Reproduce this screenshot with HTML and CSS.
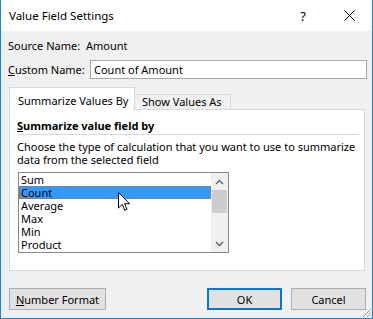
FILE: index.html
```html
<!DOCTYPE html>
<html>
<head>
<meta charset="utf-8">
<link rel="stylesheet" href="styles.css">
</head>
<body>
<div class="window">
  <div class="titlebar">
    <span class="title">Value Field Settings</span>
    <span class="help">?</span>
    <svg class="close" width="11" height="11" viewBox="0 0 11 11"><path d="M0.5 0.5 L10.5 10.5 M10.5 0.5 L0.5 10.5" stroke="#000" stroke-width="1" fill="none"/></svg>
  </div>
  <div class="body">
    <div class="row source"><span class="label">Source Name:</span><span class="value">Amount</span></div>
    <div class="row custom"><span class="label"><u>C</u>ustom Name:</span><div class="input">Count of Amount</div></div>
    <div class="tabs">
      <div class="tab active">Summarize Values By</div>
      <div class="tab inactive">Show Values As</div>
    </div>
    <div class="panel">
      <div class="heading"><u>S</u>ummarize value field by</div>
      <div class="desc">Choose the type of calculation that you want to use to summarize<br>data from the selected field</div>
      <div class="listbox">
        <ul class="items">
          <li>Sum</li>
          <li class="selected">Count</li>
          <li>Average</li>
          <li>Max</li>
          <li>Min</li>
          <li>Product</li>
        </ul>
        <div class="scrollbar">
          <div class="arrow"><svg width="9" height="6" viewBox="0 0 9 6"><path d="M1 5 L4.5 1.5 L8 5" stroke="#606060" stroke-width="1.4" fill="none"/></svg></div>
          <div class="thumb"></div>
          <div class="track"></div>
          <div class="arrow"><svg width="9" height="6" viewBox="0 0 9 6"><path d="M1 1 L4.5 4.5 L8 1" stroke="#606060" stroke-width="1.4" fill="none"/></svg></div>
        </div>
      </div>
    </div>
    <div class="buttons">
      <button class="btn numfmt"><u>N</u>umber Format</button>
      <span class="spacer"></span>
      <button class="btn ok">OK</button>
      <button class="btn cancel">Cancel</button>
    </div>
  </div>
  <svg class="grip" width="12" height="12" viewBox="0 0 12 12"><path d="M11 3 L3 11 M11 7 L7 11" stroke="#a0a0a0" stroke-width="1" fill="none"/></svg>
  <svg class="cursor" width="13" height="20" viewBox="0 0 13 20"><path d="M0.5 0.5 L0.5 16 L4.3 12.4 L6.8 18.3 L9 17.3 L6.6 11.7 L11.5 11.7 Z" fill="#fff" stroke="#000" stroke-width="1" stroke-linejoin="miter"/></svg>
</div>
</body>
</html>
```
FILE: styles.css
```css
* { box-sizing: border-box; }
html, body { margin: 0; padding: 0; }
body {
  font-family: "Noto Sans", "Open Sans", sans-serif;
  font-size: 11px;
  color: #000;
  background: #fff;
}
.window {
  position: relative;
  width: 373px;
  height: 319px;
  border: 1px solid #1883d7;
  border-top: none;
  background: #f0f0f0;
  display: flex;
  flex-direction: column;
}
.titlebar {
  height: 31px;
  background: #fff;
  display: flex;
  align-items: center;
  padding-left: 8px;
}
.title { flex: 1; font-size: 11.5px; }
.help { width: 12px; margin-right: 35px; text-align: center; font-size: 13px; }
.close { margin-right: 17px; }
.body {
  flex: 1;
  display: flex;
  flex-direction: column;
  padding: 0 8px 0 7px;
}
.row { display: flex; align-items: center; }
.source { margin-top: 6px; height: 16px; }
.source .label { width: 78px; }
.custom { margin-top: 7px; height: 19px; }
.custom .label { width: 82px; }
.input {
  flex: 1;
  margin-right: -3px;
  height: 19px;
  border: 1px solid #a6a6a6;
  background: #fff;
  padding-left: 3px;
  line-height: 17px;
}
.tabs {
  margin-top: 8px;
  height: 23px;
  display: flex;
  align-items: flex-end;
  margin-bottom: -1px;
  position: relative;
  z-index: 1;
}
.tab {
  border: 1px solid #d9d9d9;
  white-space: nowrap;
}
.tab.active {
  margin-left: 1px;
  width: 126px;
  height: 23px;
  background: #fff;
  border-bottom: none;
  padding: 5px 0 0 8px;
  line-height: 16px;
}
.tab.inactive {
  margin-left: -1px;
  width: 97px;
  height: 16px;
  background: #f0f0f0;
  padding-left: 7px;
  line-height: 14px;
}
.panel {
  margin-left: 1px;
  width: 356px;
  height: 162px;
  background: #fff;
  border: 1px solid #d9d9d9;
  padding: 0 5px 0 7px;
}
.heading {
  margin-top: 7px;
  font-weight: bold;
  line-height: 17px;
  border-bottom: 1px solid #d9d9d9;
}
.desc {
  margin-top: 5px;
  line-height: 13px;
  white-space: nowrap;
}
.listbox {
  margin-top: 6px;
  margin-left: 1px;
  width: 211px;
  height: 81px;
  border: 1px solid #828790;
  display: flex;
}
.items {
  list-style: none;
  margin: 0;
  padding: 0;
  width: 192px;
}
.items li {
  height: 13px;
  line-height: 13px;
  padding-left: 2px;
}
.items li.selected {
  background: #3399ff;
  border: 1px dotted #c2682a;
  padding-left: 1px;
  line-height: 11px;
}
.scrollbar {
  width: 17px;
  background: #f0f0f0;
  display: flex;
  flex-direction: column;
}
.arrow {
  height: 17px;
  display: flex;
  align-items: center;
  justify-content: center;
}
.thumb {
  height: 23px;
  margin: 0 1px;
  background: #cdcdcd;
}
.track { flex: 1; }
.buttons {
  margin-top: 17px;
  display: flex;
  height: 22px;
  margin-right: -2px;
}
.btn {
  font: inherit;
  color: #000;
  height: 22px;
  background: #e1e1e1;
  border: 1px solid #adadad;
  padding: 0;
  margin: 0;
}
.numfmt { margin-left: 1px; width: 97px; }
.spacer { flex: 1; }
.ok { width: 75px; border: 2px solid #0078d7; margin-right: 9px; }
.cancel { width: 75px; }
.grip { position: absolute; right: 0; bottom: 0; }
.cursor { position: absolute; left: 117px; top: 192px; }
```
